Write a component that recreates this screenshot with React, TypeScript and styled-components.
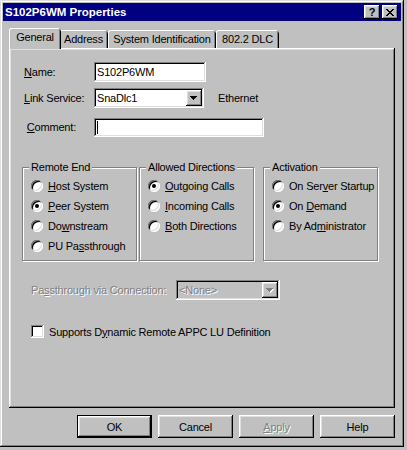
import styled, { createGlobalStyle, css } from "styled-components";

const GlobalStyle = createGlobalStyle`
  * { box-sizing: border-box; }
  body {
    margin: 0;
    background: #c0c0c0;
    font-family: "Liberation Sans", Arial, sans-serif;
    font-size: 11px;
    letter-spacing: -0.2px;
    color: #000;
  }
  u { text-underline-offset: 1px; }
`;

const raised = css`
  box-shadow: inset -1px -1px #000, inset 1px 1px #fff, inset -2px -2px #808080, inset 2px 2px #dfdfdf;
`;

const sunken = css`
  box-shadow: inset -1px -1px #fff, inset 1px 1px #808080, inset -2px -2px #dfdfdf, inset 2px 2px #000;
`;

const Window = styled.div`
  width: 404px;
  height: 447px;
  padding: 3px;
  display: flex;
  flex-direction: column;
  background: #c0c0c0;
  box-shadow: inset -1px -1px #000, inset 1px 1px #dfdfdf, inset -2px -2px #808080, inset 2px 2px #fff;
`;

const TitleBar = styled.div`
  height: 18px;
  display: flex;
  align-items: center;
  padding: 0 3px 0 2px;
  background: #000080;
  color: #fff;
`;

const TitleText = styled.span`
  flex: 1;
  font-weight: bold;
  font-size: 11.5px;
  letter-spacing: 0;
`;

const CaptionButton = styled.div<{ $gap?: number }>`
  width: 16px;
  height: 14px;
  margin-left: ${(p) => p.$gap ?? 0}px;
  display: flex;
  align-items: center;
  justify-content: center;
  background: #c0c0c0;
  color: #000;
  font-weight: bold;
  font-size: 11px;
  letter-spacing: 0;
  ${raised}
`;

const Body = styled.div`
  flex: 1;
  display: flex;
  flex-direction: column;
  padding: 7px 6px 6px 6px;
`;

const TabRow = styled.div`
  height: 20px;
  display: flex;
  align-items: flex-end;
  padding-left: 2px;
`;

const Tab = styled.div<{ $w: number; $active?: boolean }>`
  width: ${(p) => p.$w}px;
  height: 18px;
  padding-top: 2px;
  line-height: 15px;
  text-align: center;
  background: #c0c0c0;
  border-radius: 3px 3px 0 0;
  box-shadow: inset 1px 0 #fff, inset 0 1px #fff, inset -1px 0 #000, inset -2px 0 #808080;
  ${(p) =>
    p.$active &&
    css`
      position: relative;
      z-index: 1;
      width: ${p.$w + 4}px;
      height: 21px;
      margin: 0 -2px -1px -2px;
      padding-top: 2px;
      line-height: 15px;
    `}
`;

const Panel = styled.div`
  width: 386px;
  height: 360px;
  padding: 14px 0 0 13px;
  display: flex;
  flex-direction: column;
  background: #c0c0c0;
  box-shadow: inset -1px -1px #000, inset 1px 1px #fff, inset -2px -2px #808080, inset 2px 2px #dfdfdf;
`;

const FieldRow = styled.div<{ $top?: number }>`
  height: 20px;
  margin: ${(p) => p.$top ?? 0}px 0 0 2px;
  display: flex;
  align-items: center;
`;

const Label = styled.span<{ $w: number }>`
  width: ${(p) => p.$w}px;
  flex: none;
`;

const TextBox = styled.div<{ $w: number; $h?: number }>`
  width: ${(p) => p.$w}px;
  height: ${(p) => p.$h ?? 20}px;
  padding-left: 3px;
  display: flex;
  align-items: center;
  background: #fff;
  ${sunken}
`;

const Caret = styled.span`
  width: 1px;
  height: 13px;
  background: #000;
`;

const Combo = styled.div<{ $w: number; $disabled?: boolean }>`
  width: ${(p) => p.$w}px;
  height: 20px;
  padding: 2px;
  display: flex;
  align-items: center;
  background: ${(p) => (p.$disabled ? "#c0c0c0" : "#fff")};
  ${sunken}
`;

const ComboText = styled.span<{ $disabled?: boolean }>`
  flex: 1;
  padding-left: 1px;
  color: ${(p) => (p.$disabled ? "#808080" : "#000")};
`;

const DropButton = styled.div`
  width: 16px;
  height: 16px;
  display: flex;
  align-items: center;
  justify-content: center;
  background: #c0c0c0;
  ${raised}
`;

const Note = styled.span`
  margin-left: 14px;
`;

const GroupRow = styled.div`
  margin-top: 30px;
  display: flex;
`;

const Group = styled.div<{ $w: number; $ml?: number }>`
  position: relative;
  width: ${(p) => p.$w}px;
  height: 94px;
  margin-left: ${(p) => p.$ml ?? 0}px;
  padding: 8px 0 0 8px;
  border: 1px solid #808080;
  box-shadow: inset 1px 1px #fff, 1px 1px #fff;
`;

const GroupTitle = styled.span`
  position: absolute;
  top: -7px;
  left: 6px;
  padding: 0 2px;
  line-height: 13px;
  background: #c0c0c0;
`;

const RadioRow = styled.div`
  height: 20px;
  display: flex;
  align-items: center;
  gap: 5px;
  white-space: nowrap;
`;

const Radio = styled.span<{ $on?: boolean }>`
  position: relative;
  width: 12px;
  height: 12px;
  flex: none;
  border-radius: 50%;
  background: #fff;
  ${sunken}
  &::after {
    content: "";
    display: ${(p) => (p.$on ? "block" : "none")};
    position: absolute;
    left: 4px;
    top: 4px;
    width: 4px;
    height: 4px;
    border-radius: 50%;
    background: #000;
  }
`;

const PassRow = styled.div`
  height: 20px;
  margin: 19px 0 0 9px;
  display: flex;
  align-items: center;
`;

const Dim = styled.span<{ $w?: number }>`
  width: ${(p) => (p.$w ? `${p.$w}px` : "auto")};
  flex: none;
  color: #808080;
  text-shadow: 1px 1px #fff;
`;

const CheckRow = styled.div`
  height: 13px;
  margin: 25px 0 0 9px;
  display: flex;
  align-items: center;
  gap: 5px;
`;

const CheckBox = styled.span`
  width: 13px;
  height: 13px;
  background: #fff;
  ${sunken}
`;

const ButtonRow = styled.div`
  margin-top: 7px;
  display: flex;
  justify-content: flex-end;
  gap: 6px;
`;

const Button = styled.div<{ $default?: boolean; $disabled?: boolean }>`
  width: 75px;
  height: 23px;
  display: flex;
  align-items: center;
  justify-content: center;
  background: #c0c0c0;
  color: ${(p) => (p.$disabled ? "#808080" : "#000")};
  text-shadow: ${(p) => (p.$disabled ? "1px 1px #fff" : "none")};
  ${raised}
  ${(p) =>
    p.$default &&
    css`
      box-shadow: inset -1px -1px #000, inset 1px 1px #000, inset -2px -2px #000, inset 2px 2px #fff,
        inset -3px -3px #808080, inset 3px 3px #dfdfdf;
    `}
`;

const closeRows: [number, number][][] = [
  [[0, 2], [6, 2]],
  [[1, 2], [5, 2]],
  [[2, 4]],
  [[3, 2]],
  [[2, 4]],
  [[1, 2], [5, 2]],
  [[0, 2], [6, 2]],
];

function CloseGlyph() {
  return (
    <svg width="8" height="7" viewBox="0 0 8 7" shapeRendering="crispEdges">
      {closeRows.map((row, y) =>
        row.map(([x, w]) => <rect key={`${y}-${x}`} x={x} y={y} width={w} height={1} fill="#000" />)
      )}
    </svg>
  );
}

function Arrow({ dim }: { dim?: boolean }) {
  const rows = [7, 5, 3, 1];
  return (
    <svg width="8" height="5" viewBox="0 0 8 5" shapeRendering="crispEdges">
      {dim && rows.map((w, y) => <rect key={`s${y}`} x={(7 - w) / 2 + 1} y={y + 1} width={w} height={1} fill="#fff" />)}
      {rows.map((w, y) => (
        <rect key={y} x={(7 - w) / 2} y={y} width={w} height={1} fill={dim ? "#808080" : "#000"} />
      ))}
    </svg>
  );
}

type Choice = { label: React.ReactNode; on?: boolean };

const remoteEnd: Choice[] = [
  { label: <><u>H</u>ost System</> },
  { label: <><u>P</u>eer System</>, on: true },
  { label: <>Do<u>w</u>nstream</> },
  { label: <>PU Pa<u>s</u>sthrough</> },
];

const directions: Choice[] = [
  { label: <><u>O</u>utgoing Calls</>, on: true },
  { label: <><u>I</u>ncoming Calls</> },
  { label: <><u>B</u>oth Directions</> },
];

const activation: Choice[] = [
  { label: <>On Ser<u>v</u>er Startup</> },
  { label: <>On <u>D</u>emand</>, on: true },
  { label: <>By Ad<u>m</u>inistrator</> },
];

function RadioGroup({ title, items, w, ml }: { title: string; items: Choice[]; w: number; ml?: number }) {
  return (
    <Group $w={w} $ml={ml}>
      <GroupTitle>{title}</GroupTitle>
      {items.map((it, i) => (
        <RadioRow key={i}>
          <Radio $on={it.on} />
          <span>{it.label}</span>
        </RadioRow>
      ))}
    </Group>
  );
}

export default function App() {
  return (
    <>
      <GlobalStyle />
      <Window>
        <TitleBar>
          <TitleText>S102P6WM Properties</TitleText>
          <CaptionButton>?</CaptionButton>
          <CaptionButton $gap={2}>
            <CloseGlyph />
          </CaptionButton>
        </TitleBar>
        <Body>
          <TabRow>
            <Tab $w={48} $active>General</Tab>
            <Tab $w={49}>Address</Tab>
            <Tab $w={108}>System Identification</Tab>
            <Tab $w={63}>802.2 DLC</Tab>
          </TabRow>
          <Panel>
            <FieldRow>
              <Label $w={70}><u>N</u>ame:</Label>
              <TextBox $w={112}>S102P6WM</TextBox>
            </FieldRow>
            <FieldRow $top={6}>
              <Label $w={70}><u>L</u>ink Service:</Label>
              <Combo $w={110}>
                <ComboText>SnaDlc1</ComboText>
                <DropButton>
                  <Arrow />
                </DropButton>
              </Combo>
              <Note>Ethernet</Note>
            </FieldRow>
            <FieldRow $top={9}>
              <Label $w={70}>&nbsp;<u>C</u>omment:</Label>
              <TextBox $w={170} $h={19}>
                <Caret />
              </TextBox>
            </FieldRow>
            <GroupRow>
              <RadioGroup title="Remote End" items={remoteEnd} w={115} />
              <RadioGroup title="Allowed Directions" items={directions} w={115} ml={2} />
              <RadioGroup title="Activation" items={activation} w={115} ml={9} />
            </GroupRow>
            <PassRow>
              <Dim $w={145}>Pa<u>s</u>sthrough via Connection:</Dim>
              <Combo $w={104} $disabled>
                <ComboText $disabled>
                  <Dim>&lt;None&gt;</Dim>
                </ComboText>
                <DropButton>
                  <Arrow dim />
                </DropButton>
              </Combo>
            </PassRow>
            <CheckRow>
              <CheckBox />
              <span>Supports D<u>y</u>namic Remote APPC LU Definition</span>
            </CheckRow>
          </Panel>
          <ButtonRow>
            <Button $default>OK</Button>
            <Button>Cancel</Button>
            <Button $disabled><u>A</u>pply</Button>
            <Button>Help</Button>
          </ButtonRow>
        </Body>
      </Window>
    </>
  );
}
